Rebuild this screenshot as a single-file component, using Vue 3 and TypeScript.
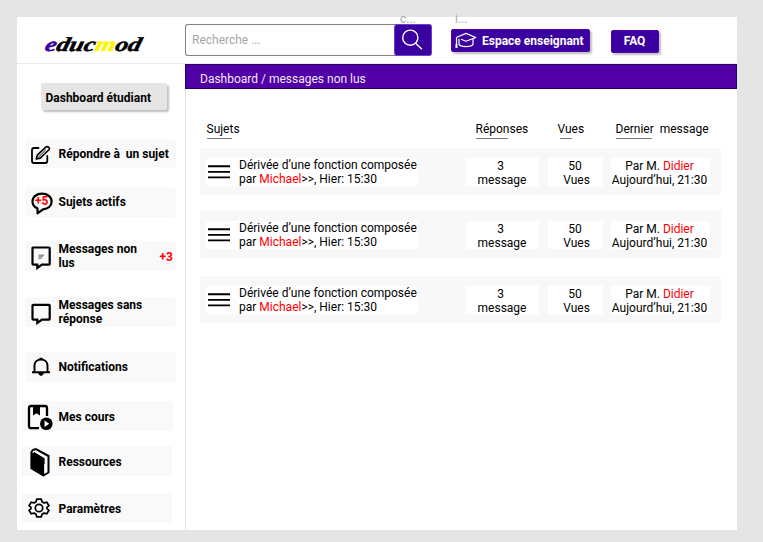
<script setup lang="ts">
interface NavItem {
  id: string
  label: string
  badge?: string
}

interface Topic {
  id: number
  title: string
  author: string
  posted: string
  replies: number
  views: number
  lastAuthor: string
  lastDate: string
}

const navItems: NavItem[] = [
  { id: 'reply', label: 'Répondre à  un sujet' },
  { id: 'active', label: 'Sujets actifs' },
  { id: 'unread', label: 'Messages non\nlus', badge: '+3' },
  { id: 'unanswered', label: 'Messages sans\nréponse' },
  { id: 'alerts', label: 'Notifications' },
  { id: 'courses', label: 'Mes cours' },
  { id: 'resources', label: 'Ressources' },
  { id: 'settings', label: 'Paramètres' },
]

const columns = [
  { id: 'h-topic', label: 'Sujets' },
  { id: 'h-replies', label: 'Réponses' },
  { id: 'h-views', label: 'Vues' },
  { id: 'h-last', label: 'Dernier  message' },
]

const topics: Topic[] = [1, 2, 3].map((id) => ({
  id,
  title: 'Dérivée d’une fonction composée',
  author: 'Michael',
  posted: 'Hier: 15:30',
  replies: 3,
  views: 50,
  lastAuthor: 'Didier',
  lastDate: 'Aujourd’hui, 21:30',
}))
</script>

<template>
  <div class="page">
    <div class="sheet">
      <header class="top">
        <svg class="logo" width="104" height="24" viewBox="0 0 104 24">
          <text transform="translate(2 17) skewX(-14)" textLength="96" lengthAdjust="spacingAndGlyphs"><tspan class="logo-e">e</tspan><tspan>duc</tspan><tspan class="logo-m">m</tspan><tspan>od</tspan></text>
        </svg>
        <div class="search">
          <span class="placeholder">Recherche ...</span>
          <span class="hint hint-c">c...</span>
          <button class="search-btn">
            <svg width="22" height="21" viewBox="0 0 22 21" fill="none" stroke="#fff" stroke-width="1.4">
              <circle cx="9.3" cy="8.7" r="7.6" />
              <path d="M14.6 14.2 21 20.3" />
            </svg>
          </button>
        </div>
        <button class="btn teacher">
          <svg width="22" height="17" viewBox="0 0 22 17" fill="none" stroke="#fff" stroke-width="1.2" stroke-linejoin="round">
            <path d="M1.2 5.5 11 1.4 20.8 5.5 11 9.3 6 7.3" />
            <path d="M4 6.8V12.3Q5 14.600 11 14.600T18 12.300V6.700" />
            <path d="M1.500 5.500V14" />
            <path d="M1.500 12V16" stroke-width="2" />
          </svg>
          <span>Espace enseignant</span>
          <span class="hint hint-i">i...</span>
        </button>
        <button class="btn faq">FAQ</button>
      </header>

      <div class="body">
        <aside class="side">
          <div class="side-title">Dashboard étudiant</div>
          <nav class="nav">
            <a v-for="item in navItems" :key="item.id" class="nav-item" :class="item.id">
              <span class="icon">
                <svg v-if="item.id === 'reply'" width="22" height="20" viewBox="0 0 22 20" fill="none" stroke="#000" stroke-width="1.8" stroke-linejoin="round" stroke-linecap="round">
                  <path d="M8.500 3H4Q2 3 2 5V16Q2 18 4 18H15Q17.300 18 17.300 16V11" />
                  <path d="M6.300 14 7.300 10.200 15.800 2.100Q17.300 1 18.700 2.300 20 3.700 18.700 5L10.200 13.100Z" stroke-width="1.600" />
                  <path d="M8.500 12 15.500 5.200" stroke-width="0.900" />
                </svg>
                <svg v-else-if="item.id === 'active'" width="22" height="23" viewBox="0 0 22 23">
                  <path d="M6.500 16.300V21.300L12 17.300C17 17 20.600 14 20.600 9.500 20.600 5 16.400 1.700 11 1.700S1.500 5 1.500 9.500C1.500 12.800 3.200 15.200 6.500 16.300Z" fill="none" stroke="#000" stroke-width="2.200" stroke-linejoin="round" />
                  <text class="bubble-count" x="10.800" y="13.400" text-anchor="middle">+5</text>
                </svg>
                <svg v-else-if="item.id === 'unread'" width="22" height="24" viewBox="0 0 22 24" fill="none">
                  <path d="M2.300 1.500H18Q18.700 1.500 18.700 2.200V18Q18.700 18.700 18 18.700H11L6.300 22V18.700H2.300Q1.500 18.700 1.500 18V2.200Q1.500 1.500 2.300 1.500Z" stroke="#000" stroke-width="2.200" />
                  <path d="M7.500 9.200H13M7.500 10.800H12M7.500 12.300H10.500" stroke="#666" />
                </svg>
                <svg v-else-if="item.id === 'unanswered'" width="22" height="22" viewBox="0 0 22 22" fill="none" stroke="#000" stroke-width="2.200">
                  <path d="M2.300 1.800H18Q18.700 1.800 18.700 2.500V16Q18.700 16.700 18 16.700H11L6.300 20V16.700H2.300Q1.500 16.700 1.500 16V2.500Q1.500 1.800 2.300 1.800Z" />
                </svg>
                <svg v-else-if="item.id === 'alerts'" width="20" height="20" viewBox="0 0 20 20" fill="none" stroke="#000" stroke-width="1.900">
                  <path d="M1 15.200H19M3.500 15V8.500C3.500 4.800 6.300 2.500 10 2.500S16.500 4.800 16.500 8.500V15" stroke-linejoin="round" />
                  <path d="M7 15.800H13Q12 19 10 19T7 15.800Z" fill="#000" stroke="none" />
                  <path d="M8.500 1.700H11.500" />
                </svg>
                <svg v-else-if="item.id === 'courses'" width="26" height="27" viewBox="0 0 26 27">
                  <path d="M12 24.200H4Q2 24.200 2 22.200V4Q2 2 4 2H18Q20 2 20 4V12" fill="none" stroke="#000" stroke-width="2.300" />
                  <path d="M6 1H13V11.500L9.500 9.200 6 11.500Z" />
                  <circle cx="19.300" cy="19.700" r="6.300" />
                  <path d="M17.500 16.500V22.900L22.300 19.700Z" fill="#fff" />
                </svg>
                <svg v-else-if="item.id === 'resources'" width="20" height="29" viewBox="0 0 20 29">
                  <path d="M1 4.500 13.500 11.500V28L1 20.500Z" stroke="#000" stroke-width="1.200" stroke-linejoin="round" />
                  <path d="M1.500 4.500C1.500 2.500 4 1 6 1.200L18.500 8V24.500L13.500 27.300" fill="none" stroke="#000" stroke-width="2" stroke-linejoin="round" />
                  <path d="M3.500 5 13.500 10.800V16" fill="none" stroke="#000" stroke-width="2.200" />
                  <path d="M5 3.200 15.800 9.300V24.800" fill="none" stroke="#f9f9f9" stroke-width="1.300" />
                </svg>
                <svg v-else width="22" height="20" viewBox="0 0 22 20" fill="none" stroke="#000" stroke-width="1.700" stroke-linejoin="round">
                  <path d="M8.700 1.200H13.300L14 3.800 16 4.900 18.800 4.200 21 7.700 19 9.300V10.700L21 12.300 18.800 15.800 16 15.100 14 16.200 13.300 18.800H8.700L8 16.200 6 15.100 3.200 15.800 1 12.300 3 10.700V9.300L1 7.700 3.200 4.200 6 4.900 8 3.800Z" />
                  <circle cx="11" cy="10" r="3.700" />
                </svg>
              </span>
              <span class="label">{{ item.label }}</span>
              <span v-if="item.badge" class="badge">{{ item.badge }}</span>
            </a>
          </nav>
        </aside>

        <main class="main">
          <div class="crumb">Dashboard / messages non lus</div>
          <div class="head">
            <span v-for="c in columns" :key="c.id" :class="c.id">{{ c.label }}</span>
          </div>
          <div class="rows">
            <article v-for="t in topics" :key="t.id" class="row">
              <div class="cell topic">
                <svg width="22" height="14" viewBox="0 0 22 14" stroke="#000" stroke-width="1.900">
                  <path d="M0 1.300H22M0 6.900H22M0 12.400H22" />
                </svg>
                <p>{{ t.title }}<br />par <b>{{ t.author }}</b>&gt;&gt;, {{ t.posted }}</p>
              </div>
              <div class="cell num">{{ t.replies + ' \nmessage' }}</div>
              <div class="cell num views">{{ t.views + ' \nVues' }}</div>
              <div class="cell last">Par M. <b>{{ t.lastAuthor }}</b><br />{{ t.lastDate }}</div>
            </article>
          </div>
        </main>
      </div>
    </div>
  </div>
</template>

<style>
body {
  margin: 0;
  background: #e5e5e5;
}
</style>

<style scoped>
* {
  box-sizing: border-box;
}
.page {
  height: 542px;
  padding: 17px 26px 12px 17px;
  background: #e5e5e5;
  font: 12px/14px Roboto, "Liberation Sans", sans-serif;
  color: #000;
  overflow: hidden;
}
.sheet {
  height: 513px;
  background: #fff;
  display: flex;
  flex-direction: column;
}
.top {
  height: 47px;
  display: flex;
  align-items: flex-start;
  border-bottom: 1px solid #ececec;
}
button {
  font: inherit;
  padding: 0;
  border: 0;
}
.logo {
  margin: 17px 39px 0 25px;
  font: italic 700 20px "Liberation Serif", serif;
  stroke: #000;
  stroke-width: 0.5px;
}
.logo-e {
  fill: #3a00a0;
  stroke: #3a00a0;
}
.logo-m {
  fill: #fff500;
  stroke: #fff500;
}
.search {
  position: relative;
  display: flex;
  width: 247px;
  height: 32px;
  margin-top: 7px;
  border: 1px solid #828282;
  border-right: 0;
  border-radius: 3px;
}
.placeholder {
  flex: 1;
  padding: 8px 0 0 6px;
  color: #a6a6a6;
}
.search-btn {
  position: relative;
  width: 38px;
  height: 32px;
  margin-top: -1px;
  display: flex;
  align-items: center;
  justify-content: center;
  background: #3a00a0;
  border: 1px solid #6d3fd0;
  border-radius: 3px;
}
.search-btn svg {
  margin: 0 3px 1px 0;
}
.hint {
  position: absolute;
  font-weight: 400;
  font-size: 12px;
  color: #aaa;
  line-height: 12px;
}
.hint-c {
  left: 214px;
  top: -12px;
}
.hint-i {
  left: 3px;
  top: -17px;
}
.btn {
  position: relative;
  display: flex;
  align-items: center;
  height: 23px;
  color: #fff;
  font-weight: 700;
  background: #3a00a0;
  border: 1px solid #5200a8;
  border-radius: 2px;
  box-shadow: 2px 2px 2px rgba(0, 0, 0, 0.25);
}
.teacher {
  width: 139px;
  margin: 12px 0 0 19px;
  padding-left: 3px;
  gap: 5px;
}
.faq {
  width: 48px;
  margin: 13px 0 0 21px;
  padding: 0 1px 2px 0;
  justify-content: center;
}
.body {
  flex: 1;
  display: flex;
}
.side {
  width: 169px;
  border-right: 1px solid #e2e2e2;
  font-weight: 700;
}
.side-title {
  width: 126px;
  height: 27px;
  margin: 19px 0 0 24px;
  padding: 8px 0 0 4.500px;
  background: #e5e5e5;
  border-radius: 2px;
  box-shadow: 2px 2px 2px rgba(0, 0, 0, 0.25);
}
.nav {
  display: flex;
  flex-direction: column;
  padding: 29px 0 0 8px;
}
.nav-item {
  display: flex;
  align-items: center;
  width: 151px;
  height: 30px;
  margin-bottom: 26px;
  background: #f9f9f9;
  border-radius: 3px;
}
.icon {
  display: flex;
  width: 28.500px;
  margin-left: 5px;
}
.label {
  white-space: pre;
}
.badge {
  margin: 2px 3px 0 auto;
  color: #f00;
}
.reply {
  height: 29px;
  margin-bottom: 19px;
}
.reply .icon {
  padding-top: 2px;
}
.active {
  margin-bottom: 24px;
}
.active .icon {
  padding: 2px 0 0 1px;
}
.bubble-count {
  font-size: 12px;
  fill: #f00;
}
.unread .icon,
.unanswered .icon {
  padding: 3px 0 0 1px;
}
.unanswered {
  margin-bottom: 25px;
}
.alerts {
  margin-bottom: 19px;
}
.alerts .icon {
  padding-left: 1px;
}
.courses {
  margin: 0 0 15px -3px;
}
.courses .icon {
  width: 31.500px;
  padding-top: 2px;
}
.courses .label {
  padding-top: 2px;
}
.resources {
  margin: 0 0 17px -4px;
}
.resources .icon {
  width: 28.500px;
  margin: 2px 0 0 9px;
}
.resources .label,
.settings .label {
  padding-top: 2px;
}
.settings {
  margin: 0 0 0 -4px;
}
.settings .icon {
  width: 31px;
  margin-left: 6.500px;
}
.main {
  flex: 1;
}
.crumb {
  height: 25px;
  margin-left: -1px;
  padding: 7px 0 0 14px;
  color: #f0e8f8;
  background: #5000a6;
  border: 1px solid #250060;
}
.head {
  display: flex;
  padding: 33px 0 0 20.500px;
  height: 59px;
}
.head span {
  height: 17px;
  white-space: pre;
  background: linear-gradient(#777, #777) 0 100% / 25px 1px no-repeat;
}
.head .h-topic {
  width: 269px;
}
.head .h-replies {
  width: 82px;
  background-size: 32px 1px;
}
.head .h-views {
  width: 58px;
  background-position: 2px 100%;
  background-size: 12px 1px;
}
.head .h-last {
  background-size: 36px 1px;
}
.rows {
  padding-left: 14px;
}
.row {
  display: flex;
  width: 521px;
  height: 47px;
  margin-bottom: 16px;
  padding: 10px 0 0 6px;
  background: #f8f8f8;
}
.row:nth-child(2) {
  margin-bottom: 18px;
}
.cell {
  height: 28px;
  background: #fff;
  text-align: center;
  white-space: nowrap;
}
.topic {
  display: flex;
  width: 212px;
  text-align: left;
}
.topic svg {
  margin: 7px 9px 0 2px;
}
.topic p {
  margin: 0;
}
.num {
  width: 73px;
  margin-left: 48px;
  padding: 1px 1px 0 0;
  white-space: pre;
}
.views {
  width: 55px;
  margin-left: 9px;
  padding: 1px 0 0 2px;
}
.last {
  width: 99px;
  margin-left: 8px;
  padding: 1px 2px 0 0;
}
b {
  font-weight: 400;
  color: #f00;
}
</style>
